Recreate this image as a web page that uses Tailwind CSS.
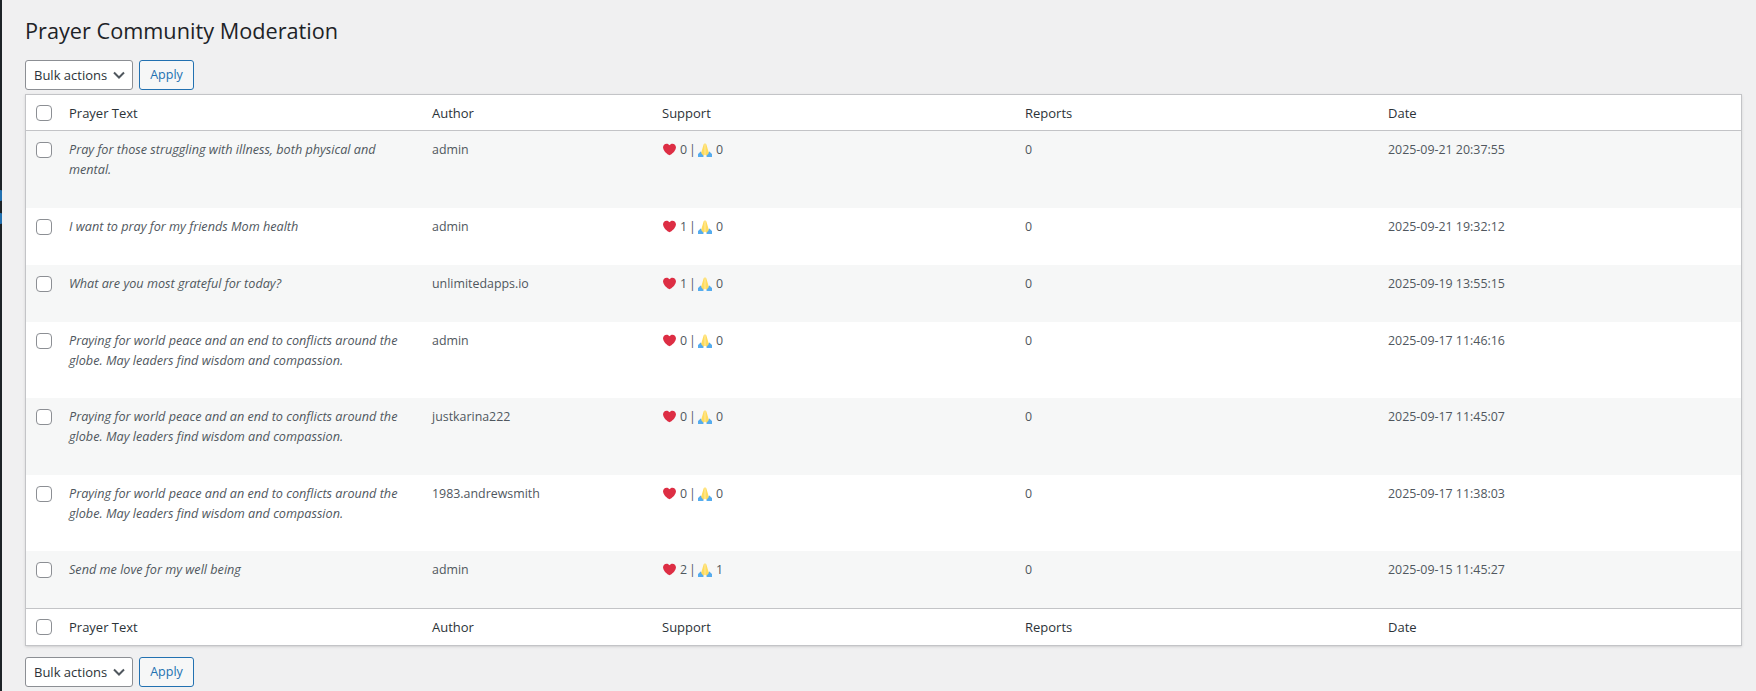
<!DOCTYPE html>
<html lang="en">
<head>
    <meta charset="UTF-8">
    <title>Prayer Community Moderation</title>
    <script src="https://cdn.jsdelivr.net/npm/@tailwindcss/browser@4"></script>
</head>
<body class="bg-[#f0f0f1] h-[691px] overflow-hidden font-['Open_Sans',sans-serif] text-[12.4px] leading-[20px] text-[#50575e]">
<div class="flex h-full">
    <!-- edge of the admin menu -->
    <div class="w-[2px] bg-[#1d2327] pt-[190px] shrink-0">
        <div class="h-[11px] bg-[#2271b1] rounded-r-[1px]"></div>
        <div class="h-[11px] mt-[12px] bg-[#2271b1] rounded-r-[1px]"></div>
    </div>

    <div class="pl-[23px] w-[1740px]">
        <h1 class="pt-[16px] h-[60px] text-[21.7px] leading-[29px] text-[#1d2327]">Prayer Community Moderation</h1>

        <div class="flex gap-[6px] h-[34px]">
            <div class="flex items-center justify-between w-[108px] h-[30px] pl-[8px] pr-[6px] bg-white border border-[#8c8f94] rounded-[3px] text-[13px] text-[#2c3338] whitespace-nowrap">Bulk actions
                <svg class="w-[14px] h-[14px]" viewBox="0 0 14 14" fill="none" stroke="#50575e" stroke-width="2"><path d="M2 4.5l5 5 5-5"/></svg>
            </div>
            <div class="flex items-center justify-center w-[55px] h-[30px] bg-[#f6f7f7] border border-[#2271b1] rounded-[3px] text-[#2271b1] text-[12.5px]">Apply</div>
        </div>

        <table class="table-fixed w-[1717px] bg-white border border-[#c3c4c7] shadow-sm border-separate border-spacing-0">
            <colgroup>
                <col class="w-[43px]"><col class="w-[363px]"><col class="w-[230px]"><col class="w-[363px]"><col class="w-[363px]"><col>
            </colgroup>
            <thead>
                <tr class="h-[36px] text-left text-[13px] text-[#2c3338]">
                    <td class="pl-[10px] border-b border-[#c3c4c7]"><span class="block w-[16px] h-[16px] bg-white border border-[#8c8f94] rounded-[4px]"></span></td>
                    <th class="font-normal border-b border-[#c3c4c7]">Prayer Text</th>
                    <th class="font-normal border-b border-[#c3c4c7]">Author</th>
                    <th class="font-normal border-b border-[#c3c4c7]">Support</th>
                    <th class="font-normal border-b border-[#c3c4c7]">Reports</th>
                    <th class="font-normal border-b border-[#c3c4c7]">Date</th>
                </tr>
            </thead>
            <tbody>
                <tr class="h-[76.5px] align-top bg-[#f6f7f7]">
                    <td class="pl-[10px] pt-[11px]"><span class="block w-[16px] h-[16px] bg-white border border-[#8c8f94] rounded-[4px]"></span></td>
                    <td class="pt-[8px] pr-[28px] italic text-[12.65px]">Pray for those struggling with illness, both physical and mental.</td>
                    <td class="pt-[9px]">admin</td>
                    <td class="pt-[9px]"><div class="flex items-center h-[20px]"><svg class="w-[13px] h-[13px] ml-[1px] mr-[4px] -mt-[1px]" viewBox="0 0 36 36"><path fill="#dd2e44" d="M35.885 11.833c0-5.45-4.418-9.868-9.867-9.868-3.308 0-6.227 1.633-8.018 4.129-1.791-2.496-4.71-4.129-8.017-4.129-5.45 0-9.868 4.417-9.868 9.868 0 .772.098 1.52.266 2.241C1.751 22.587 11.216 31.568 18 34.034c6.783-2.466 16.249-11.447 17.617-19.959.17-.721.268-1.469.268-2.242z"/></svg>0<span class="ml-[2px] mr-[2px]">|</span><svg class="w-[14px] h-[14px] mr-[4px]" viewBox="0 0 36 36"><path fill="#55acee" d="M0 36v-8l7-6 7 6v8zM36 36v-8l-7-6-7 6v8z"/><path fill="#ffdc5d" d="M17.400 1c-2 0-3 1.500-3.400 4L8 26l6 7 3.400-3zM18.600 1c2 0 3 1.500 3.400 4l6 21-6 7-3.400-3z"/></svg>0</div></td>
                    <td class="pt-[9px]">0</td>
                    <td class="pt-[9px]">2025-09-21 20:37:55</td>
                </tr>
                <tr class="h-[57px] align-top">
                    <td class="pl-[10px] pt-[11px]"><span class="block w-[16px] h-[16px] bg-white border border-[#8c8f94] rounded-[4px]"></span></td>
                    <td class="pt-[8px] pr-[28px] italic text-[12.65px]">I want to pray for my friends Mom health</td>
                    <td class="pt-[9px]">admin</td>
                    <td class="pt-[9px]"><div class="flex items-center h-[20px]"><svg class="w-[13px] h-[13px] ml-[1px] mr-[4px] -mt-[1px]" viewBox="0 0 36 36"><path fill="#dd2e44" d="M35.885 11.833c0-5.45-4.418-9.868-9.867-9.868-3.308 0-6.227 1.633-8.018 4.129-1.791-2.496-4.71-4.129-8.017-4.129-5.45 0-9.868 4.417-9.868 9.868 0 .772.098 1.52.266 2.241C1.751 22.587 11.216 31.568 18 34.034c6.783-2.466 16.249-11.447 17.617-19.959.17-.721.268-1.469.268-2.242z"/></svg>1<span class="ml-[2px] mr-[2px]">|</span><svg class="w-[14px] h-[14px] mr-[4px]" viewBox="0 0 36 36"><path fill="#55acee" d="M0 36v-8l7-6 7 6v8zM36 36v-8l-7-6-7 6v8z"/><path fill="#ffdc5d" d="M17.400 1c-2 0-3 1.500-3.400 4L8 26l6 7 3.400-3zM18.600 1c2 0 3 1.500 3.400 4l6 21-6 7-3.400-3z"/></svg>0</div></td>
                    <td class="pt-[9px]">0</td>
                    <td class="pt-[9px]">2025-09-21 19:32:12</td>
                </tr>
                <tr class="h-[57px] align-top bg-[#f6f7f7]">
                    <td class="pl-[10px] pt-[11px]"><span class="block w-[16px] h-[16px] bg-white border border-[#8c8f94] rounded-[4px]"></span></td>
                    <td class="pt-[8px] pr-[28px] italic text-[12.65px]">What are you most grateful for today?</td>
                    <td class="pt-[9px]">unlimitedapps.io</td>
                    <td class="pt-[9px]"><div class="flex items-center h-[20px]"><svg class="w-[13px] h-[13px] ml-[1px] mr-[4px] -mt-[1px]" viewBox="0 0 36 36"><path fill="#dd2e44" d="M35.885 11.833c0-5.45-4.418-9.868-9.867-9.868-3.308 0-6.227 1.633-8.018 4.129-1.791-2.496-4.71-4.129-8.017-4.129-5.45 0-9.868 4.417-9.868 9.868 0 .772.098 1.52.266 2.241C1.751 22.587 11.216 31.568 18 34.034c6.783-2.466 16.249-11.447 17.617-19.959.17-.721.268-1.469.268-2.242z"/></svg>1<span class="ml-[2px] mr-[2px]">|</span><svg class="w-[14px] h-[14px] mr-[4px]" viewBox="0 0 36 36"><path fill="#55acee" d="M0 36v-8l7-6 7 6v8zM36 36v-8l-7-6-7 6v8z"/><path fill="#ffdc5d" d="M17.400 1c-2 0-3 1.500-3.400 4L8 26l6 7 3.400-3zM18.600 1c2 0 3 1.500 3.400 4l6 21-6 7-3.400-3z"/></svg>0</div></td>
                    <td class="pt-[9px]">0</td>
                    <td class="pt-[9px]">2025-09-19 13:55:15</td>
                </tr>
                <tr class="h-[76.5px] align-top">
                    <td class="pl-[10px] pt-[11px]"><span class="block w-[16px] h-[16px] bg-white border border-[#8c8f94] rounded-[4px]"></span></td>
                    <td class="pt-[8px] pr-[28px] italic text-[12.65px]">Praying for world peace and an end to conflicts around the globe. May leaders find wisdom and compassion.</td>
                    <td class="pt-[9px]">admin</td>
                    <td class="pt-[9px]"><div class="flex items-center h-[20px]"><svg class="w-[13px] h-[13px] ml-[1px] mr-[4px] -mt-[1px]" viewBox="0 0 36 36"><path fill="#dd2e44" d="M35.885 11.833c0-5.45-4.418-9.868-9.867-9.868-3.308 0-6.227 1.633-8.018 4.129-1.791-2.496-4.71-4.129-8.017-4.129-5.45 0-9.868 4.417-9.868 9.868 0 .772.098 1.52.266 2.241C1.751 22.587 11.216 31.568 18 34.034c6.783-2.466 16.249-11.447 17.617-19.959.17-.721.268-1.469.268-2.242z"/></svg>0<span class="ml-[2px] mr-[2px]">|</span><svg class="w-[14px] h-[14px] mr-[4px]" viewBox="0 0 36 36"><path fill="#55acee" d="M0 36v-8l7-6 7 6v8zM36 36v-8l-7-6-7 6v8z"/><path fill="#ffdc5d" d="M17.400 1c-2 0-3 1.500-3.400 4L8 26l6 7 3.400-3zM18.600 1c2 0 3 1.500 3.400 4l6 21-6 7-3.400-3z"/></svg>0</div></td>
                    <td class="pt-[9px]">0</td>
                    <td class="pt-[9px]">2025-09-17 11:46:16</td>
                </tr>
                <tr class="h-[76.5px] align-top bg-[#f6f7f7]">
                    <td class="pl-[10px] pt-[11px]"><span class="block w-[16px] h-[16px] bg-white border border-[#8c8f94] rounded-[4px]"></span></td>
                    <td class="pt-[8px] pr-[28px] italic text-[12.65px]">Praying for world peace and an end to conflicts around the globe. May leaders find wisdom and compassion.</td>
                    <td class="pt-[9px]">justkarina222</td>
                    <td class="pt-[9px]"><div class="flex items-center h-[20px]"><svg class="w-[13px] h-[13px] ml-[1px] mr-[4px] -mt-[1px]" viewBox="0 0 36 36"><path fill="#dd2e44" d="M35.885 11.833c0-5.45-4.418-9.868-9.867-9.868-3.308 0-6.227 1.633-8.018 4.129-1.791-2.496-4.71-4.129-8.017-4.129-5.45 0-9.868 4.417-9.868 9.868 0 .772.098 1.52.266 2.241C1.751 22.587 11.216 31.568 18 34.034c6.783-2.466 16.249-11.447 17.617-19.959.17-.721.268-1.469.268-2.242z"/></svg>0<span class="ml-[2px] mr-[2px]">|</span><svg class="w-[14px] h-[14px] mr-[4px]" viewBox="0 0 36 36"><path fill="#55acee" d="M0 36v-8l7-6 7 6v8zM36 36v-8l-7-6-7 6v8z"/><path fill="#ffdc5d" d="M17.400 1c-2 0-3 1.500-3.400 4L8 26l6 7 3.400-3zM18.600 1c2 0 3 1.500 3.400 4l6 21-6 7-3.400-3z"/></svg>0</div></td>
                    <td class="pt-[9px]">0</td>
                    <td class="pt-[9px]">2025-09-17 11:45:07</td>
                </tr>
                <tr class="h-[76.5px] align-top">
                    <td class="pl-[10px] pt-[11px]"><span class="block w-[16px] h-[16px] bg-white border border-[#8c8f94] rounded-[4px]"></span></td>
                    <td class="pt-[8px] pr-[28px] italic text-[12.65px]">Praying for world peace and an end to conflicts around the globe. May leaders find wisdom and compassion.</td>
                    <td class="pt-[9px]">1983.andrewsmith</td>
                    <td class="pt-[9px]"><div class="flex items-center h-[20px]"><svg class="w-[13px] h-[13px] ml-[1px] mr-[4px] -mt-[1px]" viewBox="0 0 36 36"><path fill="#dd2e44" d="M35.885 11.833c0-5.45-4.418-9.868-9.867-9.868-3.308 0-6.227 1.633-8.018 4.129-1.791-2.496-4.71-4.129-8.017-4.129-5.45 0-9.868 4.417-9.868 9.868 0 .772.098 1.52.266 2.241C1.751 22.587 11.216 31.568 18 34.034c6.783-2.466 16.249-11.447 17.617-19.959.17-.721.268-1.469.268-2.242z"/></svg>0<span class="ml-[2px] mr-[2px]">|</span><svg class="w-[14px] h-[14px] mr-[4px]" viewBox="0 0 36 36"><path fill="#55acee" d="M0 36v-8l7-6 7 6v8zM36 36v-8l-7-6-7 6v8z"/><path fill="#ffdc5d" d="M17.400 1c-2 0-3 1.500-3.400 4L8 26l6 7 3.400-3zM18.600 1c2 0 3 1.500 3.400 4l6 21-6 7-3.400-3z"/></svg>0</div></td>
                    <td class="pt-[9px]">0</td>
                    <td class="pt-[9px]">2025-09-17 11:38:03</td>
                </tr>
                <tr class="h-[57px] align-top bg-[#f6f7f7]">
                    <td class="pl-[10px] pt-[11px]"><span class="block w-[16px] h-[16px] bg-white border border-[#8c8f94] rounded-[4px]"></span></td>
                    <td class="pt-[8px] pr-[28px] italic text-[12.65px]">Send me love for my well being</td>
                    <td class="pt-[9px]">admin</td>
                    <td class="pt-[9px]"><div class="flex items-center h-[20px]"><svg class="w-[13px] h-[13px] ml-[1px] mr-[4px] -mt-[1px]" viewBox="0 0 36 36"><path fill="#dd2e44" d="M35.885 11.833c0-5.45-4.418-9.868-9.867-9.868-3.308 0-6.227 1.633-8.018 4.129-1.791-2.496-4.71-4.129-8.017-4.129-5.45 0-9.868 4.417-9.868 9.868 0 .772.098 1.52.266 2.241C1.751 22.587 11.216 31.568 18 34.034c6.783-2.466 16.249-11.447 17.617-19.959.17-.721.268-1.469.268-2.242z"/></svg>2<span class="ml-[2px] mr-[2px]">|</span><svg class="w-[14px] h-[14px] mr-[4px]" viewBox="0 0 36 36"><path fill="#55acee" d="M0 36v-8l7-6 7 6v8zM36 36v-8l-7-6-7 6v8z"/><path fill="#ffdc5d" d="M17.400 1c-2 0-3 1.500-3.400 4L8 26l6 7 3.400-3zM18.600 1c2 0 3 1.500 3.400 4l6 21-6 7-3.400-3z"/></svg>1</div></td>
                    <td class="pt-[9px]">0</td>
                    <td class="pt-[9px]">2025-09-15 11:45:27</td>
                </tr>
            </tbody>
            <tfoot>
                <tr class="h-[37px] text-left text-[13px] text-[#2c3338]">
                    <td class="pl-[10px] border-t border-[#c3c4c7]"><span class="block w-[16px] h-[16px] bg-white border border-[#8c8f94] rounded-[4px]"></span></td>
                    <th class="font-normal border-t border-[#c3c4c7]">Prayer Text</th>
                    <th class="font-normal border-t border-[#c3c4c7]">Author</th>
                    <th class="font-normal border-t border-[#c3c4c7]">Support</th>
                    <th class="font-normal border-t border-[#c3c4c7]">Reports</th>
                    <th class="font-normal border-t border-[#c3c4c7]">Date</th>
                </tr>
            </tfoot>
        </table>

        <div class="flex gap-[6px] mt-[11px]">
            <div class="flex items-center justify-between w-[108px] h-[30px] pl-[8px] pr-[6px] bg-white border border-[#8c8f94] rounded-[3px] text-[13px] text-[#2c3338] whitespace-nowrap">Bulk actions
                <svg class="w-[14px] h-[14px]" viewBox="0 0 14 14" fill="none" stroke="#50575e" stroke-width="2"><path d="M2 4.5l5 5 5-5"/></svg>
            </div>
            <div class="flex items-center justify-center w-[55px] h-[30px] bg-[#f6f7f7] border border-[#2271b1] rounded-[3px] text-[#2271b1] text-[12.5px]">Apply</div>
        </div>
    </div>
</div>
</body>
</html>
